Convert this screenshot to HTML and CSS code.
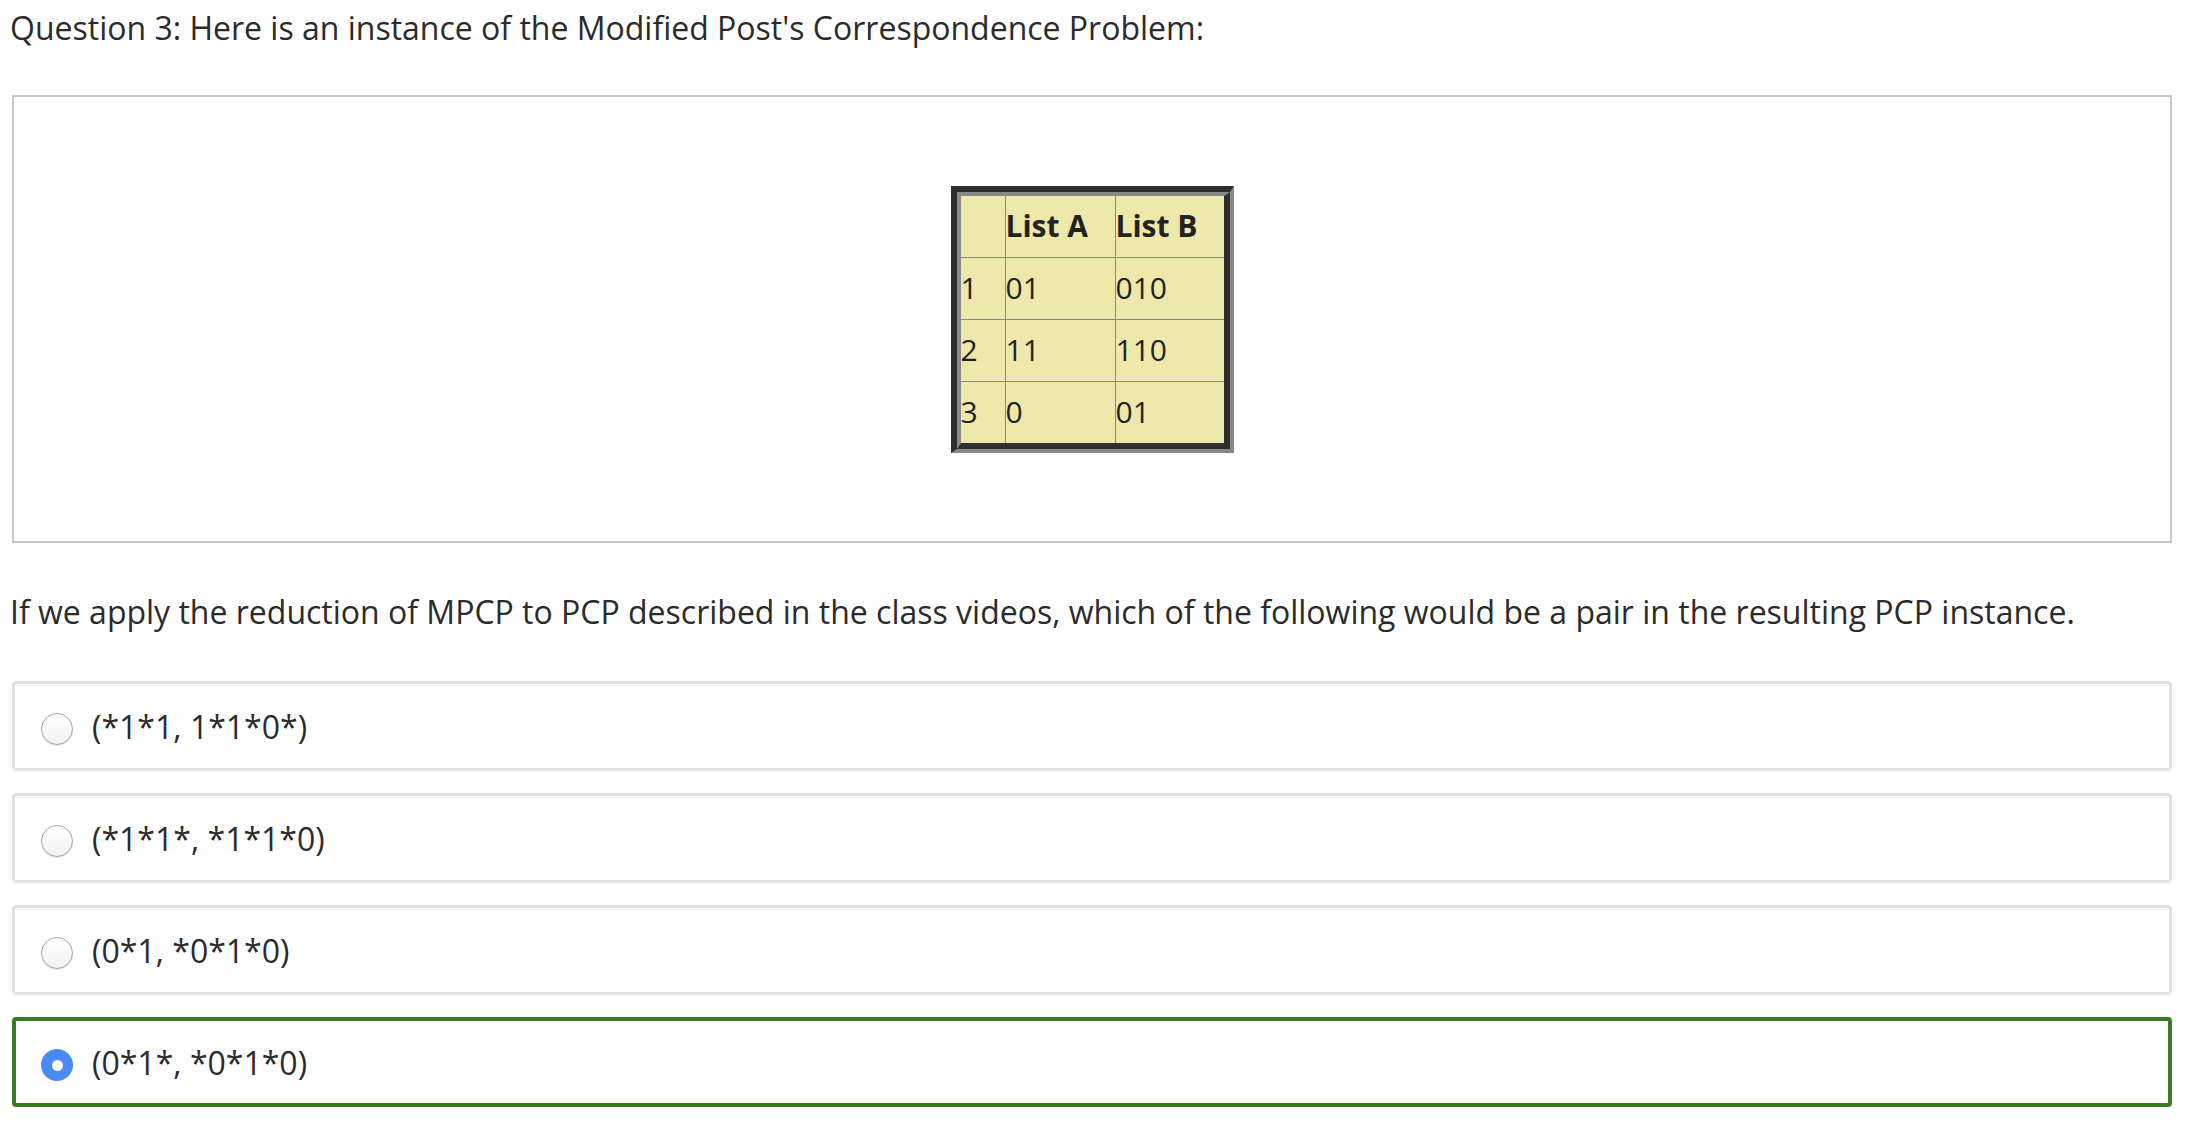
FILE: index.html
```html
<!DOCTYPE html>
<html>
<head>
<meta charset="utf-8">
<link rel="stylesheet" href="styles.css">
</head>
<body>
<div class="page">
  <p class="q-title">Question 3: Here is an instance of the Modified Post's Correspondence Problem:</p>
  <div class="figure">
    <div class="tbl-outer">
      <table class="pcp">
        <tr><td class="c1"></td><td class="c2 hd">List A</td><td class="c3 hd">List B</td></tr>
        <tr><td class="c1">1</td><td class="c2">01</td><td class="c3">010</td></tr>
        <tr><td class="c1">2</td><td class="c2">11</td><td class="c3">110</td></tr>
        <tr class="last"><td class="c1">3</td><td class="c2">0</td><td class="c3">01</td></tr>
      </table>
    </div>
  </div>
  <p class="q-text">If we apply the reduction of MPCP to PCP described in the class videos, which of the following would be a pair in the resulting PCP instance.</p>
  <div class="options">
    <div class="opt"><span class="radio"></span><span class="lbl">(*1*1, 1*1*0*)</span></div>
    <div class="opt"><span class="radio"></span><span class="lbl">(*1*1*, *1*1*0)</span></div>
    <div class="opt"><span class="radio"></span><span class="lbl">(0*1, *0*1*0)</span></div>
    <div class="opt selected"><span class="radio on"></span><span class="lbl">(0*1*, *0*1*0)</span></div>
  </div>
</div>
</body>
</html>
```
FILE: styles.css
```css
html, body {
  margin: 0;
  padding: 0;
  background: #ffffff;
}
body {
  font-family: "Open Sans", "DejaVu Sans", sans-serif;
  color: #2b2b2b;
}
.page {
  padding: 4px 16px 0 12px;
}
.q-title {
  margin: 0 0 0 -2px;
  font-size: 32px;
  line-height: 48px;
}
.figure {
  margin-top: 43px;
  border: 2px solid #c8c8c8;
  height: 448px;
  box-sizing: border-box;
  display: flex;
  align-items: center;
  justify-content: center;
}
.tbl-outer {
  border-style: solid;
  border-width: 6px 4px 4px 6px;
  border-color: #2e2e2e #888888 #888888 #2e2e2e;
  line-height: 0;
}
.pcp {
  border-collapse: separate;
  border-spacing: 0;
  border-style: solid;
  border-width: 4px 6px 6px 4px;
  border-color: #888888 #2e2e2e #2e2e2e #888888;
  background: #eee8aa;
  font-size: 30px;
  line-height: 40px;
  color: #222222;
}
.pcp td {
  padding: 0;
  height: 61px;
  vertical-align: middle;
  border-bottom: 1px solid #888888;
  text-align: left;
}
.pcp tr.last td {
  border-bottom: none;
}
.pcp .c1 { width: 44px; border-right: 1px solid #888888; }
.pcp .c2 { width: 109px; border-right: 1px solid #888888; }
.pcp .c3 { width: 108px; }
.pcp .hd { font-weight: 700; }
.q-text {
  margin: 45px 0 0 -2px;
  font-size: 32px;
  line-height: 48px;
}
.options {
  margin-top: 45px;
  display: flex;
  flex-direction: column;
  gap: 22px;
}
.opt {
  height: 90px;
  box-sizing: border-box;
  border: 3px solid #e2e2e2;
  border-radius: 4px;
  display: flex;
  align-items: center;
  padding-left: 26px;
}
.opt.selected {
  border: 4px solid #3a7b23;
  padding-left: 25px;
}
.radio {
  width: 32px;
  height: 32px;
  box-sizing: border-box;
  border-radius: 50%;
  border: 1.5px solid #a6a6a6;
  background: linear-gradient(#ffffff, #f2f2f2);
  box-shadow: 0 1px 1px rgba(0,0,0,0.10);
  flex: none;
  margin-top: 6px;
  position: relative;
}
.radio.on {
  border: none;
  background: #4a8bf3;
  box-shadow: none;
}
.radio.on::after {
  content: "";
  position: absolute;
  left: 10.5px;
  top: 10.5px;
  width: 11px;
  height: 11px;
  border-radius: 50%;
  background: #ffffff;
}
.lbl {
  margin-left: 19px;
  font-size: 32px;
  line-height: 40px;
  margin-top: 2px;
}
```
